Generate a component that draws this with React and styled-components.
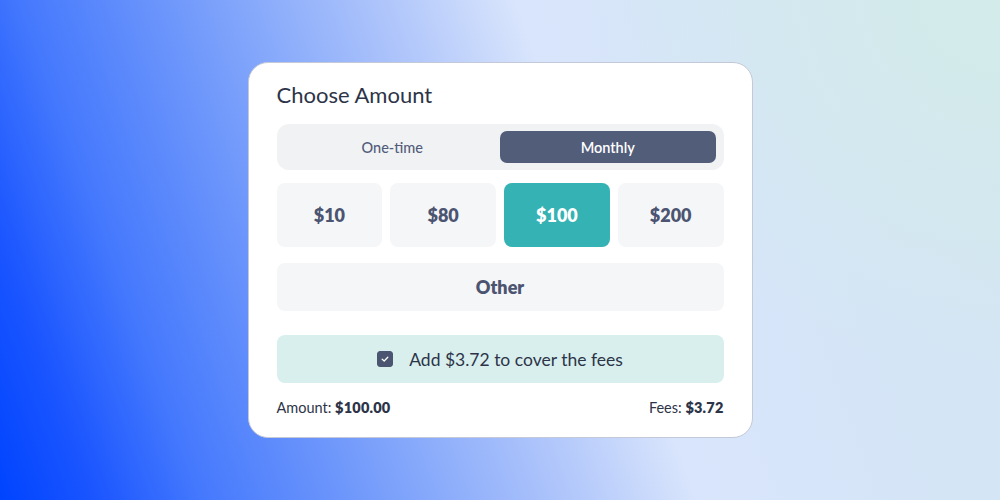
import React, { useState } from 'react';
import styled, { createGlobalStyle } from 'styled-components';

const GlobalStyle = createGlobalStyle`
    html, body {
        margin: 0;
        padding: 0;
    }
    body {
        font-family: "Lato", "Noto Sans", sans-serif;
        color: #2d3448;
    }
    * { box-sizing: border-box; }
`

const Page = styled.div`
    width: 1000px;
    height: 500px;
    display: flex;
    align-items: center;
    justify-content: center;
    background:
        radial-gradient(ellipse 420px 380px at 100% 0%, rgba(211, 236, 233, 0.95), rgba(211, 236, 233, 0) 100%),
        linear-gradient(70deg, #0044ff 0%, #1a55ff 8%, #4478fd 17%, #7aa0fb 33%, #b0c6fb 48%, #d9e5fc 59%, #d4e5f6 80%, #d3e5f2 100%);
`

const Card = styled.div`
    width: 505px;
    background: #fff;
    border: 1px solid #c3c9d6;
    border-radius: 20px;
    padding: 18px 28px 21px;
    display: flex;
    flex-direction: column;
`

const Title = styled.h2`
    margin: 0 0 15px;
    font-size: 22px;
    font-weight: 400;
    line-height: 28px;
    color: #2d3448;
`

const Toggle = styled.div`
    display: grid;
    grid-template-columns: 1fr 1fr;
    background: #f1f2f4;
    border-radius: 12px;
    padding: 7px 8px;
    height: 46px;
    margin-bottom: 13px;
`

const ToggleOption = styled.button`
    border: none;
    border-radius: 7px;
    font-family: inherit;
    font-size: 14.5px;
    font-weight: ${p => (p.$active ? 600 : 500)};
    background: ${p => (p.$active ? '#525d7a' : 'transparent')};
    color: ${p => (p.$active ? '#fff' : '#525d7a')};
    cursor: pointer;
`

const Amounts = styled.div`
    display: grid;
    grid-template-columns: repeat(4, 1fr);
    gap: 8px;
    margin-bottom: 16px;
`

const AmountButton = styled.button`
    height: 64px;
    border: none;
    border-radius: 8px;
    font-family: inherit;
    font-size: 18px;
    font-weight: 800;
    background: ${p => (p.$active ? '#35b2b4' : '#f5f6f8')};
    color: ${p => (p.$active ? '#fff' : '#4b5470')};
    cursor: pointer;
`

const OtherButton = styled(AmountButton)`
    height: 48px;
    margin-bottom: 24px;
`

const FeeBox = styled.label`
    height: 48px;
    border-radius: 8px;
    background: #d8efee;
    display: flex;
    align-items: center;
    justify-content: center;
    gap: 16px;
    font-size: 17.5px;
    color: #2d3448;
    cursor: pointer;
    margin-bottom: 16px;
`

const Check = styled.span`
    width: 16px;
    height: 16px;
    border-radius: 3px;
    background: ${p => (p.$on ? '#4b5470' : '#fff')};
    border: 1px solid #4b5470;
    display: flex;
    align-items: center;
    justify-content: center;
`

const Summary = styled.div`
    display: flex;
    justify-content: space-between;
    font-size: 14.5px;
    color: #2d3448;
    b { font-weight: 800; letter-spacing: 0.2px; }
`

const amounts = [10, 80, 100, 200]

export default function App() {
    const [freq, setFreq] = useState('monthly')
    const [amount, setAmount] = useState(100)
    const [cover, setCover] = useState(true)

    return (
        <>
            <GlobalStyle />
            <Page>
                <Card>
                    <Title>Choose Amount</Title>
                    <Toggle>
                        <ToggleOption $active={freq === 'once'} onClick={() => setFreq('once')}>One-time</ToggleOption>
                        <ToggleOption $active={freq === 'monthly'} onClick={() => setFreq('monthly')}>Monthly</ToggleOption>
                    </Toggle>
                    <Amounts>
                        {amounts.map(a => (
                            <AmountButton key={a} $active={amount === a} onClick={() => setAmount(a)}>${a}</AmountButton>
                        ))}
                    </Amounts>
                    <OtherButton onClick={() => setAmount(null)}>Other</OtherButton>
                    <FeeBox onClick={() => setCover(!cover)}>
                        <Check $on={cover}>
                            {cover && (
                                <svg width="10" height="10" viewBox="0 0 10 10" fill="none">
                                    <path d="M2.2 5.2 L4.2 7 L7.8 3.2" stroke="#fff" strokeWidth="1.3" strokeLinecap="round" strokeLinejoin="round" />
                                </svg>
                            )}
                        </Check>
                        Add $3.72 to cover the fees
                    </FeeBox>
                    <Summary>
                        <span>Amount: <b>${(amount || 0).toFixed(2)}</b></span>
                        <span>Fees: <b>$3.72</b></span>
                    </Summary>
                </Card>
            </Page>
        </>
    )
}
